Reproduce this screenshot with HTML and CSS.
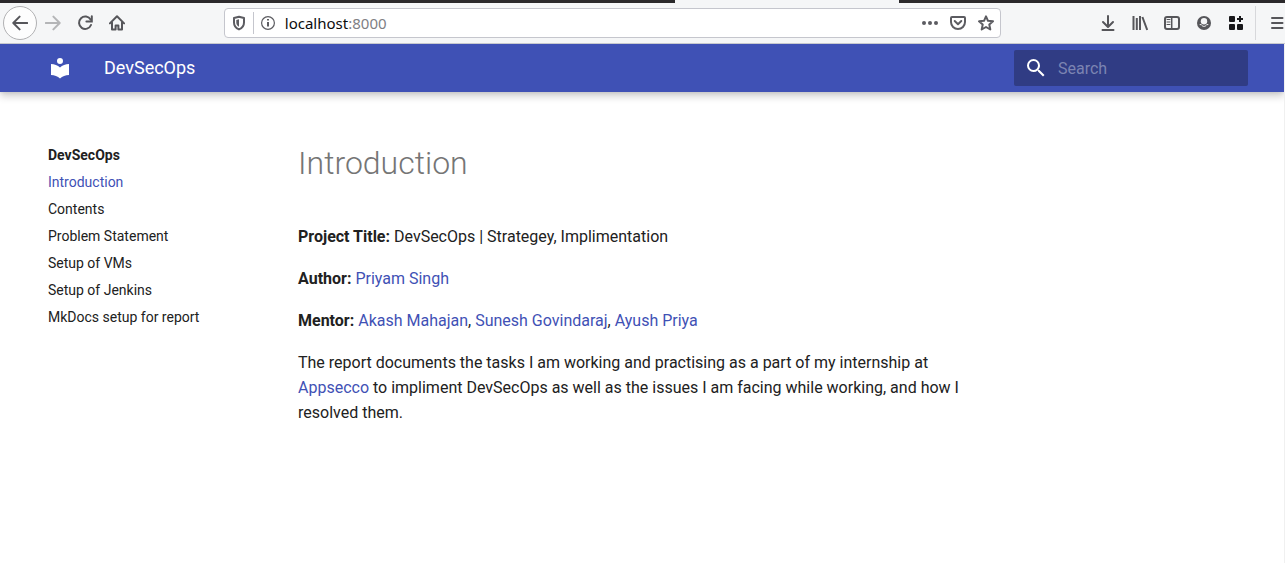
FILE: index.html
```html
<!DOCTYPE html>
<html lang="en">
<head>
<meta charset="utf-8">
<title>DevSecOps</title>
<link rel="stylesheet" href="styles.css">
</head>
<body>
<div class="tabstrip"><div class="tab-active"></div></div>
<div class="toolbar">
  <button class="tool back" aria-label="Back"><svg viewBox="0 0 16 16" class="line"><path d="M15.3 8H1.5M7.6 1.6L1.3 8l6.3 6.4"/></svg></button>
  <button class="tool dim" aria-label="Forward"><svg viewBox="0 0 16 16" class="line"><path d="M.7 8h13.8M8.4 1.6L14.7 8l-6.3 6.4"/></svg></button>
  <button class="tool" aria-label="Reload"><svg viewBox="0 0 16 16" class="line"><path d="M13.6 4.6A6.2 6.2 0 1 0 14 10"/><path d="M14.8 1.2v5.2H9.4" stroke-linejoin="miter"/></svg></button>
  <button class="tool" aria-label="Home"><svg viewBox="0 0 16 16" class="line"><path d="M.9 8.4L8 1.3l7.1 7.1"/><path d="M3 7.5v7h3.6v-4h2.8v4H13v-7"/></svg></button>
  <div class="spacer"></div>
  <div class="urlbar">
    <button class="url-btn" aria-label="Tracking protection"><svg viewBox="0 0 16 16" class="line"><path d="M8 1.8L13 3v4.4c0 3.200-1.800 5.600-5 7-3.200-1.400-5-3.800-5-7V3z"/><path class="solid" d="M8 4.300v7.500c-1.800-1.100-2.700-2.600-2.700-4.600V5z"/></svg></button>
    <span class="url-sep"></span>
    <button class="url-btn" aria-label="Site information"><svg viewBox="0 0 16 16" class="line thin"><circle cx="8" cy="8" r="6.400"/><path stroke-width="2" d="M8 7v4.500M8 4v1.600" stroke-linecap="butt"/></svg></button>
    <div class="address">localhost<span class="port">:8000</span></div>
    <button class="url-btn" aria-label="Page actions"><svg viewBox="0 0 16 16"><circle cx="2" cy="8" r="2"/><circle cx="8" cy="8" r="2"/><circle cx="14" cy="8" r="2"/></svg></button>
    <button class="url-btn" aria-label="Save to Pocket"><svg viewBox="0 0 16 16" class="line"><path d="M2 2h12a1 1 0 0 1 1 1v4a7 7 0 0 1-14 0V3a1 1 0 0 1 1-1z"/><path d="M4.700 6L8 9.200 11.300 6"/></svg></button>
    <button class="url-btn" aria-label="Bookmark"><svg viewBox="0 0 16 16" class="line"><path d="M8 1.300l2 4.500 5 .5-3.700 3.300 1 4.900L8 12l-4.300 2.500 1-4.900L1 6.300l5-.5z"/></svg></button>
  </div>
  <div class="spacer"></div>
  <button class="tool" aria-label="Downloads"><svg viewBox="0 0 16 16" class="line"><path d="M8 1v10.500M3 7l5 5 5-5M2.500 15h11"/></svg></button>
  <button class="tool" aria-label="Library"><svg viewBox="0 0 16 16" class="line"><path stroke-linecap="butt" d="M1.500 1v14M4.800 3v12M8 1v14M10.400 2l4.800 13"/></svg></button>
  <button class="tool" aria-label="Sidebars"><svg viewBox="0 0 16 16" class="line"><rect x="1" y="2" width="14" height="12" rx="2"/><path stroke-width="1.500" d="M7.700 2v12"/><path stroke-width="1" d="M3 4.500h3M3 7h3M3 9.500h3"/></svg></button>
  <button class="tool" aria-label="Account"><svg viewBox="0 0 16 16"><circle cx="8" cy="8" r="7"/><circle class="cutout" cx="8" cy="6.200" r="3.200"/><path class="cutout-line" d="M3.700 9.600h1.600C6 10.900 7 11.400 8 11.400s2-.5 2.700-1.800h1.600"/></svg></button>
  <button class="tool dark" aria-label="Extensions"><svg viewBox="0 0 16 16"><rect x="1" y="1" width="6" height="6" rx="1"/><rect x="1" y="9" width="6" height="6" rx="1"/><rect x="9" y="9" width="6" height="6" rx="1"/><path d="M11 1h2v2h2v2h-2v2h-2V5H9V3h2z"/></svg></button>
  <span class="tool-sep"></span>
  <button class="tool menu" aria-label="Menu"><svg viewBox="0 0 16 16" class="line"><path d="M3 3h10.500M3 8h10.500M3 13h10.500"/></svg></button>
</div>
<div class="page">
  <header class="header">
    <a class="logo" href="#" aria-label="DevSecOps"><svg viewBox="0 0 24 24"><path d="M12 8a3 3 0 0 0 3-3 3 3 0 0 0-3-3 3 3 0 0 0-3 3 3 3 0 0 0 3 3m0 3.540C9.640 9.350 6.500 8 3 8v11c3.500 0 6.640 1.350 9 3.540 2.360-2.190 5.500-3.540 9-3.540V8c-3.500 0-6.640 1.350-9 3.540z"/></svg></a>
    <span class="site-title">DevSecOps</span>
    <label class="search">
      <svg viewBox="0 0 24 24"><path d="M9.500 3A6.500 6.500 0 0 1 16 9.500c0 1.610-.59 3.090-1.560 4.230l.27.270h.79l5 5-1.500 1.500-5-5v-.79l-.27-.27A6.516 6.516 0 0 1 9.500 16 6.500 6.500 0 0 1 3 9.500 6.500 6.500 0 0 1 9.500 3m0 2C7 5 5 7 5 9.500S7 14 9.500 14 14 12 14 9.500 12 5 9.500 5z"/></svg>
      <input type="text" placeholder="Search" aria-label="Search">
    </label>
  </header>
  <div class="layout">
    <nav class="nav">
      <strong>DevSecOps</strong>
      <a class="active" href="#">Introduction</a>
      <a href="#">Contents</a>
      <a href="#">Problem Statement</a>
      <a href="#">Setup of VMs</a>
      <a href="#">Setup of Jenkins</a>
      <a href="#">MkDocs setup for report</a>
    </nav>
    <main class="content">
      <h1>Introduction</h1>
      <p><strong>Project Title:</strong> DevSecOps | Strategey, Implimentation</p>
      <p><strong>Author:</strong> <a href="#">Priyam Singh</a></p>
      <p><strong>Mentor:</strong> <a href="#">Akash Mahajan</a>, <a href="#">Sunesh Govindaraj</a>, <a href="#">Ayush Priya</a></p>
      <p>The report documents the tasks I am working and practising as a part of my internship at <a href="#">Appsecco</a> to impliment DevSecOps as well as the issues I am facing while working, and how I resolved them.</p>
    </main>
  </div>
</div>
</body>
</html>
```
FILE: styles.css
```css
* { box-sizing: border-box; }
body {
  margin: 0;
  min-height: 100vh;
  display: flex;
  flex-direction: column;
  background: #fff;
  color: #212121;
  font-family: Roboto, sans-serif;
  font-size: 16px;
}
a { color: #3f51b5; text-decoration: none; }
button { border: 0; padding: 0; background: none; }
svg { display: block; fill: currentColor; }
.line { fill: none; stroke: currentColor; stroke-width: 2; stroke-linecap: round; stroke-linejoin: round; }
.thin { stroke-width: 1.2; }
.solid { fill: currentColor; stroke: none; }
.cutout { fill: #f5f6f7; }
.cutout-line { fill: none; stroke: #f5f6f7; stroke-width: 1; }

/* Browser chrome */
.tabstrip {
  height: 3px;
  background: #2b292b;
  display: grid;
  grid-template-columns: 675fr 224fr 386fr;
}
.tab-active { grid-column: 2; background: #f5f6f7; }
.toolbar {
  display: flex;
  align-items: center;
  height: 41px;
  padding-left: 3px;
  background: #f5f6f7;
  border-bottom: 1px solid #c8c9ce;
  color: #56565a;
}
.tool {
  flex: none;
  width: 32px;
  height: 34px;
  display: flex;
  align-items: center;
  justify-content: center;
  color: inherit;
}
.tool svg, .url-btn svg { width: 16px; height: 16px; }
.back {
  width: 34px;
  border: 1px solid #b1b1b3;
  border-radius: 50%;
  background: #fdfdfd;
}
.dim { color: #b4b5b7; }
.dark { color: #18181b; }
.menu { width: 24px; justify-content: flex-end; }
.tool-sep { width: 1px; height: 34px; margin: 0 5px 0 3px; background: #d7d8db; }
.spacer { flex: 91 1 0; }
.urlbar {
  flex: 777 1 0;
  display: flex;
  align-items: center;
  height: 30px;
  background: #fff;
  border: 1px solid #c5c6cd;
  border-radius: 4px;
  color: #5c5c61;
}
.url-btn {
  width: 28px;
  height: 28px;
  display: flex;
  align-items: center;
  justify-content: center;
  color: inherit;
}
.url-sep { width: 1px; height: 22px; background: #c5c6cd; }
.address {
  flex: 1;
  padding-left: 3px;
  font-family: "Noto Sans", sans-serif;
  font-size: 15px;
  color: #0c0c0d;
}
.port { color: #808084; }

/* Documentation page */
.page { flex: 1; border-right: 1px solid #f0f0f0; }
.header {
  display: flex;
  align-items: center;
  height: 48px;
  padding: 0 36px 0 48px;
  background: #3f51b5;
  color: #fff;
  box-shadow: 0 0 4px rgba(0, 0, 0, .1), 0 4px 8px rgba(0, 0, 0, .2);
  clip-path: inset(0 0 -16px 0);
}
.logo { color: #fff; }
.logo svg, .search svg { width: 24px; height: 24px; }
.site-title { flex: 1; padding-left: 32px; font-size: 18px; line-height: 48px; }
.search {
  display: flex;
  align-items: center;
  gap: 10px;
  width: 234px;
  height: 36px;
  padding: 0 10px;
  background: #303c84;
  border-radius: 2px;
}
.search input {
  flex: 1;
  min-width: 0;
  padding: 0;
  border: 0;
  outline: 0;
  background: transparent;
  color: #fff;
  font: inherit;
}
.search input::placeholder { color: #7c84b2; }
.layout {
  display: grid;
  grid-template-columns: 250px minmax(0, 688px);
  padding: 54px 48px 24px;
}
.nav {
  display: flex;
  flex-direction: column;
  align-items: flex-start;
  gap: 9px;
  font-size: 14px;
  line-height: 18px;
}
.nav a { color: #212121; }
.nav a.active { color: #3f51b5; }
.content { line-height: 25px; }
h1 {
  margin: 0 0 44px;
  color: #757575;
  font-size: 32px;
  font-weight: 300;
  line-height: 34px;
}
p { margin: 0 0 17px; }
```
